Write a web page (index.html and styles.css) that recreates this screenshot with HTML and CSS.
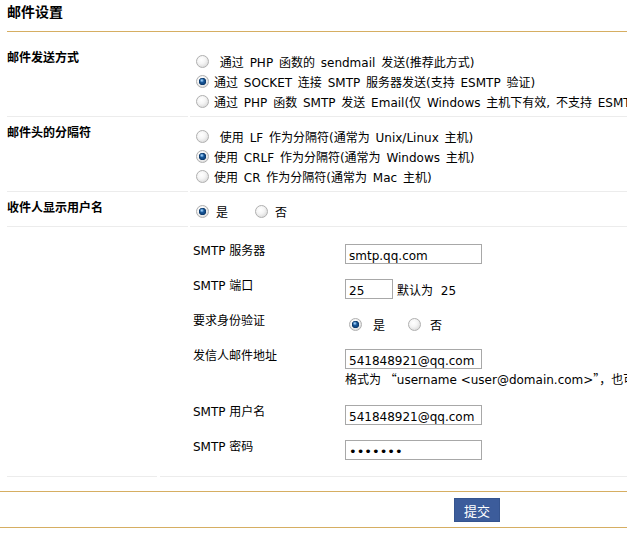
FILE: index.html
```html
<!DOCTYPE html>
<html lang="zh-CN">
<head>
<meta charset="utf-8">
<title>邮件设置</title>
<link rel="stylesheet" href="styles.css">
</head>
<body>
<div class="page">
  <div class="title">邮件设置</div>
  <div class="form">
    <div class="row first">
      <div class="lbl">邮件发送方式</div>
      <div class="val">
        <label class="opt"><input class="r" type="radio" name="mailsend"><span>&nbsp;通过 PHP 函数的 sendmail 发送(推荐此方式)</span></label>
        <label class="opt"><input class="r" type="radio" name="mailsend" checked><span>通过 SOCKET 连接 SMTP 服务器发送(支持 ESMTP 验证)</span></label>
        <label class="opt"><input class="r" type="radio" name="mailsend"><span>通过 PHP 函数 SMTP 发送 Email(仅 Windows 主机下有效, 不支持 ESMTP 验证)</span></label>
      </div>
    </div>
    <div class="row">
      <div class="lbl">邮件头的分隔符</div>
      <div class="val">
        <label class="opt"><input class="r" type="radio" name="delim"><span>&nbsp;使用 LF 作为分隔符(通常为 Unix/Linux 主机)</span></label>
        <label class="opt"><input class="r" type="radio" name="delim" checked><span>使用 CRLF 作为分隔符(通常为 Windows 主机)</span></label>
        <label class="opt"><input class="r" type="radio" name="delim"><span>使用 CR 作为分隔符(通常为 Mac 主机)</span></label>
      </div>
    </div>
    <div class="row">
      <div class="lbl">收件人显示用户名</div>
      <div class="val">
        <div class="opt">
          <label class="pair"><input class="r" type="radio" name="showuser" checked><span>是</span></label>
          <label class="pair no"><input class="r" type="radio" name="showuser"><span>否</span></label>
        </div>
      </div>
    </div>
    <div class="row smtp">
      <div class="lbl"></div>
      <div class="val">
        <div class="srow">
          <div class="slbl">SMTP 服务器</div>
          <div class="sval"><input class="txt" type="text" value="smtp.qq.com"></div>
        </div>
        <div class="srow">
          <div class="slbl">SMTP 端口</div>
          <div class="sval line"><input class="txt port" type="text" value="25"><span class="note">默认为 25</span></div>
        </div>
        <div class="srow">
          <div class="slbl">要求身份验证</div>
          <div class="sval">
            <div class="opt inner">
              <label class="pair"><input class="r" type="radio" name="auth" checked><span>是</span></label>
              <label class="pair no"><input class="r" type="radio" name="auth"><span>否</span></label>
            </div>
          </div>
        </div>
        <div class="srow">
          <div class="slbl">发信人邮件地址</div>
          <div class="sval">
            <input class="txt" type="text" value="541848921@qq.com">
            <div class="hint">格式为 <span class="cq">“</span>username &lt;user@domain.com&gt;<span class="cq">”，</span>也可以直接输入邮件地址，例如 user@domain.com</div>
          </div>
        </div>
        <div class="srow">
          <div class="slbl">SMTP 用户名</div>
          <div class="sval"><input class="txt" type="text" value="541848921@qq.com"></div>
        </div>
        <div class="srow">
          <div class="slbl">SMTP 密码</div>
          <div class="sval"><input class="txt pw" type="password" value="1234567"></div>
        </div>
      </div>
    </div>
  </div>
  <div class="foot"><button class="btn" type="button">提交</button></div>
</div>
</body>
</html>
```
FILE: styles.css
```css
html, body {
  margin: 0;
  padding: 0;
  background: #ffffff;
  overflow: hidden;
}
body {
  font-family: "DejaVu Sans", "Noto Sans CJK SC", sans-serif;
  font-size: 12px;
  color: #000;
}
.page {
  width: 627px;
  overflow: hidden;
}
.title {
  margin-left: 7px;
  padding: 2px 0 9px;
  line-height: 20px;
  font-size: 14px;
  font-weight: bold;
  border-bottom: 1px solid #d6ae62;
}
.row {
  display: flex;
  margin-left: 7px;
}
.row.first {
  margin-top: 10px;
}
.lbl {
  flex: 0 0 181px;
  padding-top: 6px;
  line-height: 20px;
  font-weight: bold;
  border-bottom: 1px solid #ececec;
}
.val {
  flex: 1;
  min-width: 0;
  margin-left: 2px;
  padding: 9px 0 5px 6px;
  border-bottom: 1px solid #ececec;
  word-spacing: 2px;
}
.opt {
  display: flex;
  align-items: center;
  height: 20px;
  white-space: nowrap;
}
.opt > .r {
  margin: 0 5px 0 0;
}
.pair {
  display: flex;
  align-items: center;
}
.pair .r {
  margin: 0 7px 0 0;
}
.pair.no {
  margin-left: 27px;
}
.pair.no .r {
  margin-right: 7px;
}
.inner {
  padding-left: 4px;
}
.inner .pair .r {
  margin-right: 11px;
}
.inner .pair.no {
  margin-left: 23px;
}
.inner .pair.no .r {
  margin-right: 9px;
}
.r {
  appearance: none;
  -webkit-appearance: none;
  width: 13px;
  height: 13px;
  flex: 0 0 13px;
  border-radius: 50%;
  border: 1px solid #b0b0b0;
  background: radial-gradient(circle at 40% 35%, #ffffff 0, #f5f5f5 40%, #cfcfcf 100%);
  box-sizing: border-box;
}
.r:checked {
  background:
    radial-gradient(circle at 44% 40%, #bfe0fa 0, rgba(120, 180, 235, 0.8) 1px, rgba(60, 130, 200, 0) 2.2px),
    radial-gradient(circle at 50% 50%, #1c5fa2 0, #124a86 2.4px, #0b3768 3.4px, rgba(11, 55, 104, 0) 4px),
    radial-gradient(circle at 40% 35%, #ffffff 0, #f5f5f5 40%, #cfcfcf 100%);
}
.row.smtp .lbl {
  flex-basis: 150px;
}
.row.smtp .val {
  margin-left: 3px;
  padding: 9px 0 9px 33px;
  word-spacing: 0;
}
.srow {
  display: flex;
  align-items: flex-start;
  padding: 8px 0 7px;
}
.slbl {
  flex: 0 0 152px;
  line-height: 14px;
  white-space: nowrap;
}
.sval {
  flex: 1;
  min-width: 0;
  white-space: nowrap;
}
.sval.line {
  display: flex;
  align-items: center;
}
.txt {
  box-sizing: border-box;
  width: 137px;
  height: 20px;
  margin: 0;
  padding: 3px 3px 0;
  border: 1px solid #a8a8a8;
  font-family: "DejaVu Sans", "Noto Sans CJK SC", sans-serif;
  font-size: 12px;
  color: #000;
  background: #fff;
  display: block;
  outline: none;
}
.txt.pw {
  font-size: 13px;
  letter-spacing: 0;
}
.txt.port {
  width: 48px;
}
.note {
  margin-left: 4px;
  word-spacing: 4px;
}
.hint {
  line-height: 20px;
  white-space: nowrap;
}
.cq {
  font-family: "Noto Sans CJK SC", sans-serif;
}
.foot {
  margin-top: 14px;
  border-top: 1px solid #d6ae62;
  border-bottom: 1px solid #d6ae62;
  padding: 6px 0 5px 454px;
}
.btn {
  display: block;
  width: 46px;
  height: 24px;
  margin: 0;
  padding: 0;
  border: 1px solid #35548f;
  background: #3c5c9b;
  color: #fff;
  font-family: "DejaVu Sans", "Noto Sans CJK SC", sans-serif;
  font-size: 13px;
}
```
